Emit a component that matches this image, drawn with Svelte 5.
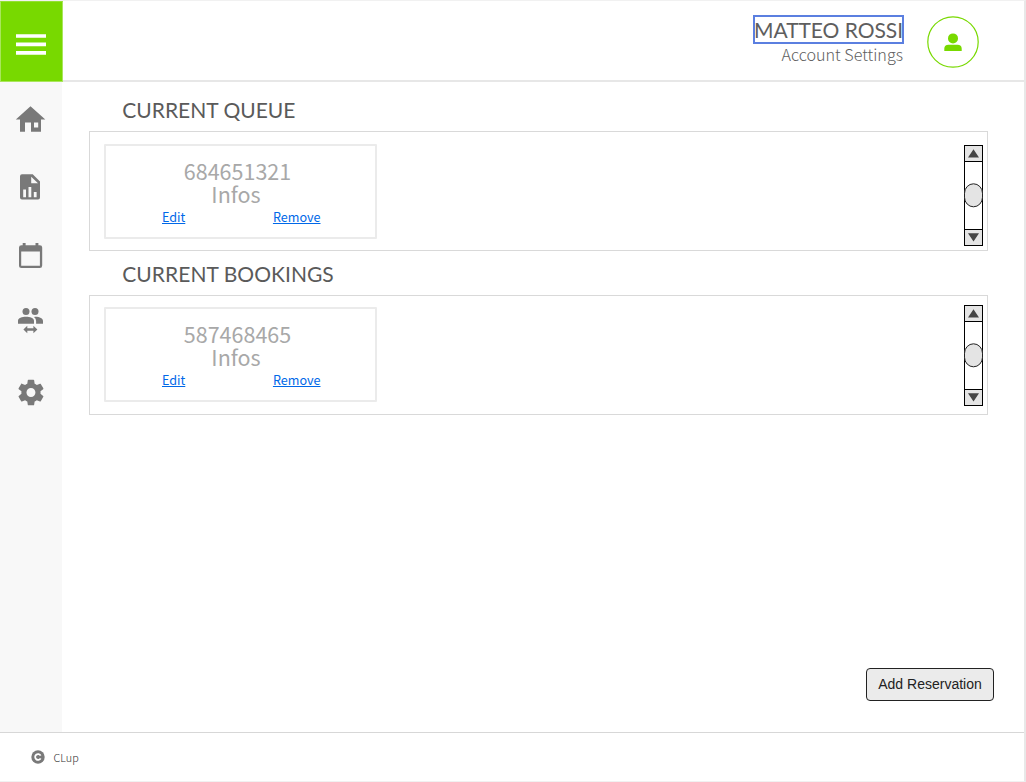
<script>
  const sections = [
    { title: 'CURRENT QUEUE', number: '684651321', name: 'queue' },
    { title: 'CURRENT BOOKINGS', number: '587468465', name: 'bookings' }
  ];
</script>

<div class="page">
  <header>
    <button class="menu" aria-label="Menu">
      <svg width="63" height="81" viewBox="0 0 63 81">
        <path d="M16 34.2h30v3.6H16zM16 42.5h30v3.7H16zM16 51h30v3.7H16z" fill="#fff" />
      </svg>
    </button>
    <div class="account">
      <div class="user">MATTEO ROSSI</div>
      <div class="settings">Account Settings</div>
    </div>
    <svg class="avatar" width="52" height="52" viewBox="0 0 52 52">
      <circle cx="26" cy="26" r="25.2" fill="#fff" stroke="#78d900" stroke-width="1.2" />
      <circle cx="26" cy="22.4" r="5" fill="#78d900" />
      <path d="M17.3 34.9v-2.2q0-4 4.3-4h8.8q4.3 0 4.3 4v2.2z" fill="#78d900" />
    </svg>
  </header>

  <div class="body">
    <nav>
      <svg width="62" height="334" viewBox="0 82 62 334" fill="#797979">
        <path fill-rule="evenodd" d="M30.5 106.3 45.3 119.5H41V131.7H31V122.4H25V131.7H20V119.5H15.8zM34 122.4V127.4H38.2V122.4z" />
        <path fill-rule="evenodd" d="M22 174.3H32.7L40 181.5V197.5Q40 199.5 38 199.5H22Q20 199.5 20 197.5V176.3Q20 174.3 22 174.3zM31.2 176.8V183.2H38zM23.2 189.5V197.2H26V189.5zM28.5 187V197.2H31.3V187zM33.8 192V197.2H36.6V192z" />
        <path fill-rule="evenodd" d="M22.7 243H25.6V245.2H35.5V243H38.4V245.2H39.8Q42.2 245.2 42.2 247.6V265.5Q42.2 268 39.8 268H21.5Q19 268 19 265.5V247.6Q19 245.2 21.5 245.2H22.7zM21.2 251.6V265.8H39.9V251.6z" />
        <circle cx="26" cy="311.4" r="3.5" />
        <circle cx="35" cy="311.4" r="3.5" />
        <path d="M18 323.8V320.8C18 317.8 22 316.7 26 316.7S34 317.8 34 320.8V323.8zM35.2 316.7C40 316.8 43 318.2 43 321V323.8H36.1V321Q36.1 318.6 34 317z" />
        <path d="M23.4 329.5 27.3 325.8V328.2H33.4V325.8L37.4 329.5 33.4 333.2V330.8H27.3V333.2z" />
        <path transform="translate(15.6 377.2) scale(1.28)" d="M19.43 12.98c.04-.32.07-.64.07-.98s-.03-.66-.07-.98l2.11-1.65c.19-.15.24-.42.12-.64l-2-3.46c-.12-.22-.39-.3-.61-.22l-2.49 1c-.52-.4-1.08-.73-1.69-.98l-.38-2.65C14.46 2.18 14.25 2 14 2h-4c-.25 0-.46.18-.49.42l-.38 2.65c-.61.25-1.17.59-1.69.98l-2.49-1c-.23-.09-.49 0-.61.22l-2 3.46c-.13.22-.07.49.12.64l2.11 1.65c-.04.32-.07.65-.07.98s.03.66.07.98l-2.11 1.65c-.19.15-.24.42-.12.64l2 3.46c.12.22.39.3.61.22l2.49-1c.52.4 1.08.73 1.69.98l.38 2.65c.03.24.24.42.49.42h4c.25 0 .46-.18.49-.42l.38-2.65c.61-.25 1.17-.59 1.69-.98l2.49 1c.23.09.49 0 .61-.22l2-3.46c.12-.22.07-.49-.12-.64zM12 15.5c-1.93 0-3.5-1.57-3.5-3.5s1.57-3.5 3.5-3.5 3.5 1.57 3.5 3.5-1.57 3.5-3.5 3.5z" />
      </svg>
    </nav>

    <main>
      {#each sections as s}
        <section class={s.name}>
          <h2>{s.title}</h2>
          <div class="panel">
            <div class="card">
              <div class="info number">{s.number}</div>
              <div class="info">Infos</div>
              <div class="links">
                <span class="link">Edit</span>
                <span class="link">Remove</span>
              </div>
            </div>
            <svg class="scroll" width="19" height="101" viewBox="0 0 19 101">
              <rect x=".5" y=".5" width="18" height="100" fill="#fff" stroke="#000" />
              <rect x=".5" y=".5" width="18" height="16" fill="#e4e4e4" stroke="#000" />
              <rect x=".5" y="84.5" width="18" height="16" fill="#e4e4e4" stroke="#000" />
              <path d="M9.5 4.2 15 12.5H4zM9.5 96.5 4 88.2h11z" fill="#444" />
              <rect x=".5" y="38.8" width="18" height="23" rx="9" ry="9.5" fill="#e4e4e4" stroke="#222" />
            </svg>
          </div>
        </section>
      {/each}
      <button class="add">Add Reservation</button>
    </main>
  </div>

  <footer>
    <svg width="14" height="14" viewBox="0 0 14 14">
      <circle cx="7" cy="7" r="6.7" fill="#797979" />
      <path d="M9.6 5.6A2.9 2.9 0 1 0 9.6 8.4" fill="none" stroke="#fff" stroke-width="1.8" />
    </svg>
    <span>CLup</span>
  </footer>
</div>

<style>
  :global(body) { margin: 0; background: #fff; }
  .page {
    box-sizing: border-box;
    width: 1026px;
    height: 782px;
    display: flex;
    flex-direction: column;
    border-top: 1px solid #f1f1f1;
    border-bottom: 1px solid #f1f1f1;
    border-right: 2px solid #e8e8e8;
    font-family: "Noto Sans CJK SC", sans-serif;
    overflow: hidden;
  }
  header {
    box-sizing: border-box;
    height: 81px;
    display: flex;
    flex: none;
    align-items: flex-start;
    border-bottom: 2px solid #e7e7e7;
  }
  .menu {
    box-sizing: border-box;
    width: 63px;
    height: 81px;
    padding: 0;
    border: 1px solid #a9e65c;
    border-top-color: #93e034;
    background: #78d900;
  }
  .menu svg { display: block; margin: -3px 0 0 -1px; }
  .account {
    margin: 14px 23px 0 auto;
    display: flex;
    flex-direction: column;
    align-items: flex-end;
    color: #5e5e5e;
    white-space: nowrap;
  }
  .user {
    box-sizing: border-box;
    width: 151px;
    height: 29px;
    border: 2px solid #5b7fe0;
    font: 21px/26px Lato, sans-serif;
    letter-spacing: -0.04px;
    display: flex;
    justify-content: center;
  }
  .settings { font-size: 16.15px; line-height: 21px; font-weight: 300; padding-right: 1px; }
  .avatar { margin: 15px 45px 0 0; }
  .body { flex: 1; display: flex; min-height: 0; }
  nav { width: 62px; background: #f8f8f8; }
  nav svg { display: block; }
  main { flex: 1; display: flex; flex-direction: column; padding: 15px 36px 0 27px; }
  h2 {
    margin: 0 0 0 33.3px;
    height: 34px;
    font: 21px/26px Lato, sans-serif;
    color: #5a5a5a;
    white-space: nowrap;
  }
  .bookings h2 { letter-spacing: 0.04px; }
  .panel {
    box-sizing: border-box;
    width: 899px;
    height: 120px;
    border: 1px solid #d9d9d9;
    display: flex;
    justify-content: space-between;
    padding: 12px 4px 0 14px;
  }
  section { height: 164px; }
  .bookings .panel { padding-top: 11px; }
  .card {
    box-sizing: border-box;
    width: 273px;
    height: 95px;
    border: 2px solid #ebebeb;
    border-radius: 1px;
    padding-top: 13px;
  }
  .info {
    height: 23px;
    line-height: 23px;
    font-size: 21.5px;
    color: #a8a8a8;
    text-align: center;
    padding-right: 9px;
  }
  .info.number { padding-right: 6px; }
  .links {
    display: flex;
    justify-content: space-between;
    padding: 2px 54.5px 0 56px;
    font-size: 12.6px;
    line-height: 20px;
    color: #0068e8;
  }
  .link { text-decoration: underline; }
  .scroll { margin-top: 1px; }
  .bookings .scroll { margin-top: -2px; }
  .add {
    box-sizing: border-box;
    align-self: flex-end;
    width: 128px;
    height: 33px;
    margin: auto -6px 31px 0;
    padding: 0 0 2px;
    border: 1px solid #222;
    border-radius: 4px;
    background: #ebebeb;
    color: #222;
    font: 14px "Liberation Sans", sans-serif;
  }
  footer {
    box-sizing: border-box;
    height: 49px;
    flex: none;
    border-top: 1px solid #d7d7d7;
    display: flex;
    align-items: center;
    gap: 8.5px;
    padding-left: 31px;
    font-size: 10.8px;
    font-weight: 300;
    color: #333;
  }
</style>
